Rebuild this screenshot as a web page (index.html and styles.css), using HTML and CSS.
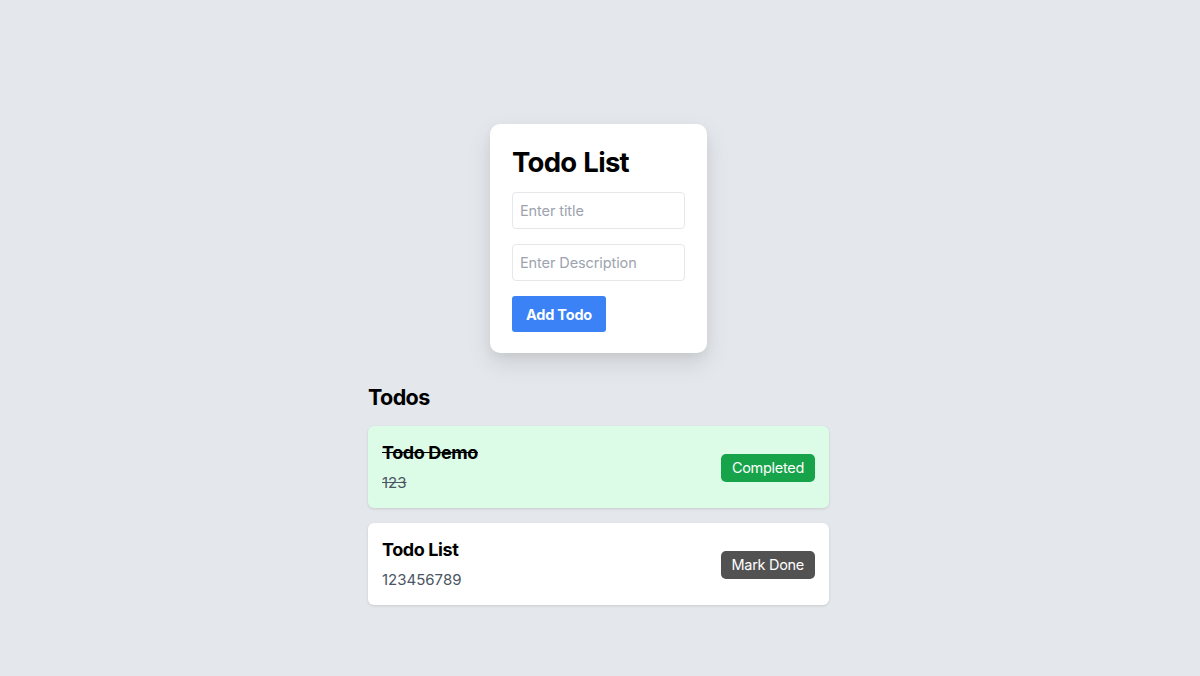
FILE: index.html
```html
<!DOCTYPE html>
<html>
<head>
<meta charset="utf-8">
<link rel="stylesheet" href="styles.css">
</head>
<body>
<main class="page">
  <section class="form-card">
    <h1 class="form-title">Todo List</h1>
    <input class="field" type="text" placeholder="Enter title">
    <input class="field" type="text" placeholder="Enter Description">
    <button class="add-btn">Add Todo</button>
  </section>
  <section class="todos">
    <h2 class="todos-title">Todos</h2>
    <div class="todo todo-done">
      <div class="todo-text">
        <div class="todo-name">Todo Demo</div>
        <div class="todo-desc">123</div>
      </div>
      <button class="status-btn status-done">Completed</button>
    </div>
    <div class="todo">
      <div class="todo-text">
        <div class="todo-name">Todo List</div>
        <div class="todo-desc">123456789</div>
      </div>
      <button class="status-btn status-pending">Mark Done</button>
    </div>
  </section>
</main>
</body>
</html>
```

FILE: styles.css
```css
html, body {
  margin: 0;
  padding: 0;
  background: #e4e7eb;
  font-family: Inter, "Noto Sans", sans-serif;
}
.page {
  display: flex;
  flex-direction: column;
  align-items: center;
  padding-top: 124px;
  padding-right: 3px;
  min-height: 676px;
  box-sizing: border-box;
}
.form-card {
  width: 217px;
  box-sizing: border-box;
  background: #fff;
  border-radius: 10px;
  padding: 22px 22px 21px;
  box-shadow: 0 10px 25px rgba(0,0,0,0.10), 0 4px 10px rgba(0,0,0,0.05);
  display: flex;
  flex-direction: column;
  align-items: flex-start;
}
.form-title {
  margin: 0 0 14px;
  font-size: 27.5px;
  line-height: 32px;
  font-weight: 700;
  color: #000;
  letter-spacing: -0.7px;
  word-spacing: 1px;
}
.field {
  width: 173px;
  height: 37px;
  box-sizing: border-box;
  border: 1px solid #e5e7eb;
  border-radius: 4px;
  padding: 0 7px;
  font-family: Inter, sans-serif;
  font-size: 14.5px;
  letter-spacing: -0.1px;
  margin: 0 0 15px;
  outline: none;
  color: #111;
}
.field::placeholder {
  color: #9ca3af;
}
.add-btn {
  height: 36px;
  width: 94px;
  border: none;
  border-radius: 3px;
  background: #3b82f6;
  color: #fff;
  font-family: Inter, sans-serif;
  font-weight: 700;
  font-size: 14.5px;
  letter-spacing: -0.2px;
  padding: 0;
}
.todos {
  width: 461px;
  margin-top: 31px;
}
.todos-title {
  margin: 0 0 16px;
  font-size: 21.5px;
  line-height: 26px;
  font-weight: 700;
  color: #000;
  letter-spacing: -0.6px;
}
.todo {
  height: 82px;
  box-sizing: border-box;
  background: #fff;
  border-radius: 6px;
  padding: 0 14px;
  display: flex;
  align-items: center;
  justify-content: space-between;
  box-shadow: 0 1px 3px rgba(0,0,0,0.12);
  margin-bottom: 15px;
}
.todo-done {
  background: #dcfce7;
}
.todo-text {
  padding-top: 1px;
}
.todo-name {
  font-size: 18px;
  font-weight: 700;
  color: #000;
  line-height: 22px;
  letter-spacing: -0.4px;
}
.todo-desc {
  margin-top: 9px;
  font-size: 15px;
  color: #4b5563;
  line-height: 20px;
}
.todo-done .todo-name,
.todo-done .todo-desc {
  text-decoration: line-through;
}
.status-btn {
  height: 28px;
  border: none;
  border-radius: 5px;
  color: #fff;
  font-family: Inter, sans-serif;
  font-size: 14.5px;
  letter-spacing: -0.3px;
  padding: 0 11px;
  margin-top: 1px;
}
.status-done {
  background: #16a34a;
}
.status-pending {
  background: #525252;
}
```
